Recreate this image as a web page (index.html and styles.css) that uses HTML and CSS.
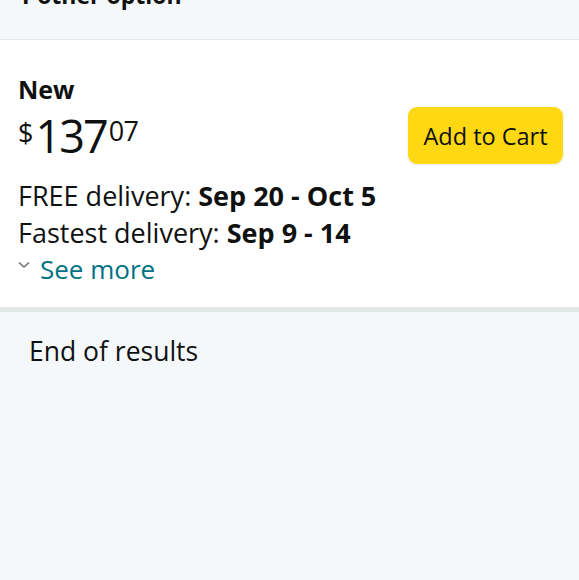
FILE: index.html
```html
<!DOCTYPE html>
<html>
<head>
<meta charset="utf-8">
<link rel="stylesheet" href="styles.css">
</head>
<body>
<div class="top">
  <div class="options-title">1 other option</div>
</div>
<div class="card">
  <div class="row">
    <div class="info">
      <div class="cond">New</div>
      <div class="price"><span class="sym">$</span><span class="whole">137</span><span class="frac">07</span></div>
    </div>
    <button class="cart">Add to Cart</button>
  </div>
  <div class="delivery">
    <div class="line">FREE delivery: <b>Sep 20 - Oct 5</b></div>
    <div class="line">Fastest delivery: <b>Sep 9 - 14</b></div>
    <div class="line more"><svg class="chev" width="12" height="8" viewBox="0 0 12 8"><path d="M1 1.5 L6 6 L11 1.5" fill="none" stroke="#6f7373" stroke-width="1.6"/></svg><span>See more</span></div>
  </div>
</div>
<div class="sep"></div>
<div class="end">End of results</div>
</body>
</html>
```
FILE: styles.css
```css
html, body {
  margin: 0;
  padding: 0;
  background: #f5f8fa;
  font-family: "Open Sans", "Noto Sans", sans-serif;
  color: #0f1111;
  width: 579px;
  height: 580px;
  overflow: hidden;
}
.top {
  height: 39px;
  border-bottom: 1px solid #e3e6e6;
  padding-left: 18px;
  overflow: hidden;
}
.options-title {
  font-size: 23px;
  font-weight: 700;
  line-height: 30px;
  margin-top: -20px;
}
.card {
  background: #fff;
  padding: 34px 16px 0 18px;
  height: 233px;
}
.row {
  display: flex;
  justify-content: space-between;
  align-items: flex-start;
}
.cond {
  font-size: 25px;
  font-weight: 700;
  line-height: 30px;
}
.price {
  display: flex;
  align-items: flex-start;
  margin-top: 6px;
  line-height: 1;
}
.sym {
  font-size: 27px;
  margin-top: 9px;
  margin-right: 2px;
}
.whole {
  font-size: 45px;
  line-height: 48px;
  letter-spacing: -2px;
  margin-top: 2px;
}
.frac {
  font-size: 27px;
  margin-top: 7px;
  margin-left: 2px;
  letter-spacing: -0.5px;
}
.cart {
  margin-top: 33px;
  width: 155px;
  height: 57px;
  background: #ffd814;
  border: none;
  border-radius: 9px;
  font-family: inherit;
  font-size: 23.5px;
  color: #0f1111;
  padding: 0;
  box-shadow: 0 1px 3px rgba(213,217,217,0.6);
}
.delivery {
  margin-top: 13px;
}
.line {
  font-size: 27px;
  line-height: 37px;
}
.line b {
  font-weight: 700;
}
.more {
  display: flex;
  align-items: center;
  color: #007185;
  font-size: 26px;
}
.chev {
  margin-right: 10px;
  margin-top: -10px;
}
.sep {
  height: 5px;
  background: #e3e6e6;
}
.end {
  font-size: 26.5px;
  padding: 22px 0 0 29px;
  line-height: 34px;
}
```
